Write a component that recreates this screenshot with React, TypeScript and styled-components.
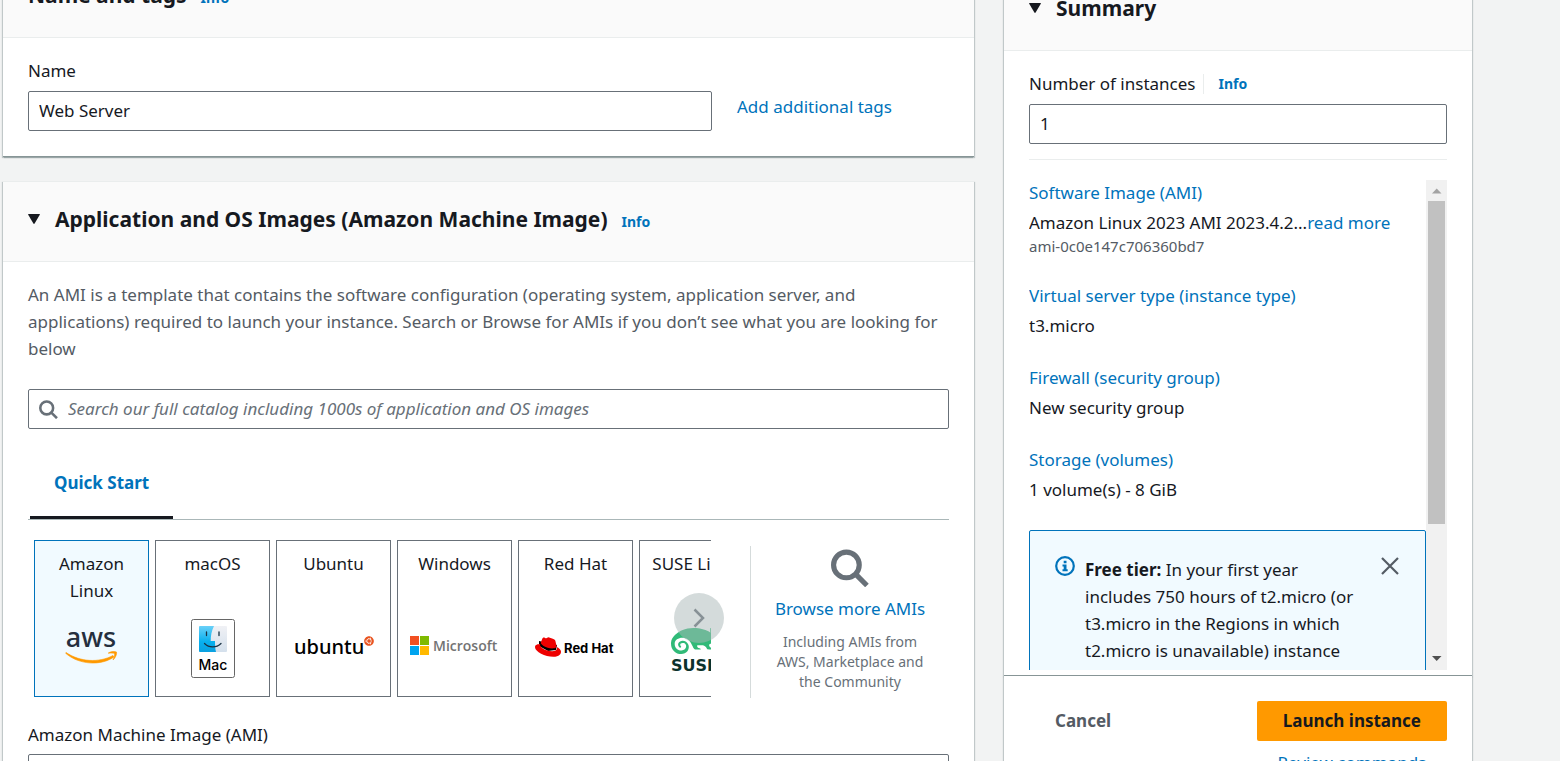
import React from "react";
import styled, { createGlobalStyle, css } from "styled-components";
import { SiRedhat, SiSuse } from "react-icons/si";
import { FaUbuntu } from "react-icons/fa";

const color = {
  text: "#16191f",
  secondary: "#545b64",
  muted: "#687078",
  link: "#0073bb",
  line: "#eaeded",
  page: "#f2f3f3",
  header: "#fafafa",
  info: "#f1faff",
};

const GlobalStyle = createGlobalStyle`
  *, *::before, *::after { box-sizing: border-box; }
  body {
    margin: 0;
    background: ${color.page};
    color: ${color.text};
    font-family: "Noto Sans", "Open Sans", sans-serif;
    font-size: 17px;
    line-height: 27px;
  }
  button, input { font: inherit; color: inherit; }
  h2, p, ul { margin: 0; padding: 0; }
`;

const Page = styled.main`
  height: 100vh;
  overflow: hidden;
  padding: 0 88px 0 3px;
`;

const Columns = styled.div`
  display: grid;
  grid-template-columns: minmax(0, 1fr) 468px;
  gap: 30px;
  align-items: start;
  margin-top: -43px;
`;

const MainColumn = styled.div`
  display: grid;
  grid-template-columns: minmax(0, 1fr);
  gap: 24px;
`;

const SideColumn = styled.aside`
  padding-top: 13px;
`;

const Card = styled.section`
  background: #fff;
  border-top: 1px solid ${color.line};
  border-bottom: 1px solid #879596;
  box-shadow: 1px 1px 1px rgba(0, 28, 36, 0.2), -1px 1px 1px rgba(0, 28, 36, 0.2);
`;

const CardHeader = styled.header`
  display: flex;
  align-items: center;
  height: 80px;
  padding: 0 25px 6px;
  background: ${color.header};
  border-bottom: 1px solid ${color.line};
`;

const CardTitle = styled.h2`
  font-size: 21px;
  line-height: 28px;
  font-weight: 700;
`;

const Caret = styled.svg`
  width: 12px;
  height: 12px;
  margin-right: 15px;
  fill: ${color.text};
`;

const CardBody = styled.div`
  padding: 19px 25px 25px;
`;

const Link = styled.a`
  color: ${color.link};
  text-decoration: none;
`;

const InfoLink = styled(Link)`
  font-size: 14px;
  font-weight: 700;
  line-height: 20px;
  margin-left: 14px;
`;

const HeaderInfo = styled(InfoLink)`
  padding-top: 6px;
`;

const Label = styled.label`
  display: block;
`;

const boxed = css`
  width: 100%;
  height: 40px;
  border: 1px solid ${color.muted};
  border-radius: 2px;
  background: #fff;
`;

const TextInput = styled.input`
  ${boxed}
  padding: 0 10px 2px;
  outline: none;
`;

const NameRow = styled.div`
  display: grid;
  grid-template-columns: minmax(0, 1fr) 212px;
  gap: 25px;
  margin-top: 7px;
`;

const TagsLink = styled(Link)`
  line-height: 32px;
`;

const Description = styled.p`
  color: ${color.secondary};
`;

const SearchBox = styled.div`
  ${boxed}
  display: flex;
  align-items: center;
  gap: 10px;
  margin-top: 27px;
  padding: 0 10px;
`;

const SearchField = styled.input`
  flex: 1;
  min-width: 0;
  border: 0;
  padding: 0 0 2px;
  outline: none;
  background: transparent;
  &::placeholder {
    color: ${color.muted};
    font-style: italic;
    opacity: 1;
  }
`;

const TabBar = styled.div`
  display: flex;
  height: 91px;
  padding: 20px 0 0 2px;
  border-bottom: 1px solid #aab7b8;
`;

const Tab = styled.button`
  border: 0;
  border-bottom: 3px solid ${color.text};
  background: none;
  padding: 0 24px;
  color: ${color.link};
  font-weight: 700;
`;

const QuickStart = styled.div`
  display: flex;
  align-items: flex-start;
  padding: 20px 0 23px 6px;
`;

const Carousel = styled.div`
  position: relative;
  flex: 1;
  min-width: 0;
`;

const Tiles = styled.div`
  display: flex;
  gap: 6px;
  overflow: hidden;
`;

const Tile = styled.button<{ $selected?: boolean }>`
  display: flex;
  flex: 0 0 115px;
  flex-direction: column;
  height: 157px;
  padding: 9px 10px 10px;
  border: 1px solid ${(p) => (p.$selected ? color.link : color.muted)};
  background: ${(p) => (p.$selected ? color.info : "#fff")};
  text-align: center;
`;

const TileName = styled.span`
  display: block;
  width: 100%;
  height: 55px;
`;

const TileLogo = styled.span`
  display: flex;
  flex: 1;
  width: 100%;
  align-items: center;
  justify-content: center;
`;

const NextButton = styled.button`
  position: absolute;
  top: 53px;
  right: -13px;
  display: flex;
  align-items: center;
  justify-content: center;
  width: 50px;
  height: 50px;
  padding: 0;
  border: 0;
  border-radius: 50%;
  background: rgba(170, 183, 184, 0.5);
`;

const Browse = styled.div`
  display: flex;
  flex: 0 0 199px;
  flex-direction: column;
  align-items: center;
  height: 152px;
  margin: 6px 0 0 39px;
  padding-top: 3px;
  border-left: 1px solid #d5dbdb;
  text-align: center;
`;

const BrowseLink = styled(Link)`
  margin-top: 8px;
`;

const BrowseNote = styled.p`
  width: 168px;
  margin-top: 10px;
  color: ${color.muted};
  font-size: 14px;
  line-height: 20px;
`;

const AmiSelect = styled.button`
  ${boxed}
  display: block;
  height: 90px;
  margin-top: 6px;
`;

const InstancesLabel = styled.div`
  display: flex;
  align-items: center;
  margin-bottom: 7px;
`;

const LabelInfo = styled(InfoLink)`
  margin-left: 8px;
  padding-left: 14px;
  border-left: 1px solid ${color.line};
`;

const SummaryBody = styled.div`
  padding: 19px 25px 5px;
`;

const Scroller = styled.div`
  display: flex;
  height: 511px;
  margin-top: 15px;
  padding-top: 20px;
  border-top: 1px solid ${color.line};
`;

const ScrollContent = styled.div`
  flex: 1;
  min-width: 0;
  margin-top: -1px;
  overflow: hidden;
`;

const ScrollTrack = styled.div`
  display: flex;
  flex: 0 0 21px;
  flex-direction: column;
  align-items: center;
  background: #f1f1f1;
`;

const ScrollArrow = styled.svg`
  width: 21px;
  height: 21px;
`;

const ScrollThumb = styled.div`
  width: 17px;
  height: 323px;
  margin-bottom: auto;
  background: #c1c1c1;
`;

const Facts = styled.div`
  display: grid;
  gap: 25px;
`;

const Fact = styled.div`
  white-space: nowrap;
`;

const FactValue = styled.div`
  margin-top: 3px;
`;

const FactNote = styled.div`
  color: ${color.secondary};
  font-size: 15px;
  line-height: 21px;
`;

const Alert = styled.div`
  display: flex;
  align-items: flex-start;
  margin-top: 27px;
  padding: 25px;
  border: 1px solid ${color.link};
  border-radius: 2px;
  background: ${color.info};
`;

const AlertIcon = styled.svg`
  flex: none;
  width: 20px;
  height: 20px;
`;

const AlertText = styled.p`
  flex: 0 0 276px;
  margin-left: 10px;
`;

const CloseButton = styled.button`
  display: flex;
  margin-left: auto;
  padding: 0;
  border: 0;
  background: none;
`;

const Footer = styled.footer`
  display: flex;
  justify-content: space-between;
  align-items: flex-start;
  padding: 25px 25px 25px;
  background: #fff;
  box-shadow: 1px 1px 1px rgba(0, 28, 36, 0.2), -1px 1px 1px rgba(0, 28, 36, 0.2);
`;

const Button = styled.button<{ $primary?: boolean }>`
  height: 40px;
  padding: 0 26px 2px;
  border: 0;
  border-radius: 2px;
  background: ${(p) => (p.$primary ? "#ff9900" : "transparent")};
  color: ${(p) => (p.$primary ? color.text : color.secondary)};
  font-weight: 700;
  white-space: nowrap;
`;

const Launch = styled.div`
  display: flex;
  flex-direction: column;
  align-items: center;
  gap: 8px;
`;

function CaretDown() {
  return (
    <Caret viewBox="0 0 12 12" aria-hidden="true">
      <path d="M.6 1h10.8q.8.1.4.8L6.6 10.500q-.6.8-1.2 0L.2 1.800Q-.2 1.100.6 1z" />
    </Caret>
  );
}

function Magnifier({ size, weight }: { size: number; weight: number }) {
  return (
    <svg width={size} height={size} viewBox="0 0 37 37" fill="none" stroke={color.muted} strokeWidth={weight} aria-hidden="true">
      <circle cx="15" cy="15.500" r="12.500" />
      <path d="M24 24.500 35 35.500" />
    </svg>
  );
}

function AwsLogo() {
  return (
    <svg width="54" height="40" viewBox="0 0 54 40" role="img" overflow="visible">
      <text x="26" y="21" textAnchor="middle" fontFamily="'Noto Sans', sans-serif" fontSize="27" fontWeight="500" fill="#252f3e">aws</text>
      <path d="M1 26.500C15 36 34 37 48 29.500l1 1.500C36 40 14 39 .7 27.300z" fill="#f90" stroke="#f90" strokeWidth=".6" />
      <path d="M43.500 26.800c3-1.600 6.500-1.500 8-.8.500 1.800-.7 5.600-3.500 8 1.500-3 1.900-5.200 1.500-6.300-1-.7-3.600-.8-6-.4z" fill="#f90" stroke="#f90" strokeWidth=".6" />
    </svg>
  );
}

function MacLogo() {
  return (
    <svg width="44" height="65" viewBox="0 -6 44 65" role="img">
      <defs>
        <linearGradient id="finderBlue" x1="0" y1="0" x2="0" y2="1">
          <stop offset="0" stopColor="#6ad0f8" />
          <stop offset=".6" stopColor="#08b0ee" />
          <stop offset="1" stopColor="#0aa0e0" />
        </linearGradient>
        <linearGradient id="finderGrey" x1="0" y1="0" x2="0" y2="1">
          <stop offset="0" stopColor="#f0f1f5" />
          <stop offset="1" stopColor="#d4e0ec" />
        </linearGradient>
      </defs>
      <rect x=".5" y=".5" width="43" height="58" rx="2" fill="#fff" stroke="#666" />
      <rect x="8" y="7" width="28" height="26" rx="1" fill="url(#finderGrey)" />
      <path d="M9 7h14c-2.500 5-3.300 10-3.300 15H24c0 4 .2 8 1 11H9q-1 0-1-1V8q0-1 1-1z" fill="url(#finderBlue)" />
      <path d="M15.500 13v3.500M28 13v3.500M13.500 24.500c4.500 4.500 12 4.500 16.500 0" fill="none" stroke="#1a3244" strokeWidth="1.300" strokeLinecap="round" />
      <text x="22" y="51" textAnchor="middle" fontFamily="Inter, sans-serif" fontSize="14" fontWeight="500">Mac</text>
    </svg>
  );
}

function UbuntuLogo() {
  return (
    <svg width="80" height="24" viewBox="0 0 80 24" role="img" overflow="visible">
      <text x="0" y="20" fontFamily="'Noto Sans', sans-serif" fontSize="20" fontWeight="500">ubuntu</text>
      <FaUbuntu x="70" y="2" width="10" height="10" size={10} color="#e95420" />
    </svg>
  );
}

function MicrosoftLogo() {
  return (
    <svg width="89" height="20" viewBox="0 0 89 20" role="img">
      <path d="M0 0h9v9H0z" fill="#f25022" />
      <path d="M10 0h9v9h-9z" fill="#7fba00" />
      <path d="M0 10h9v9H0z" fill="#00a4ef" />
      <path d="M10 10h9v9h-9z" fill="#ffb900" />
      <text x="23" y="15" fontFamily="'Open Sans', sans-serif" fontSize="14" fontWeight="600" fill="#737373">Microsoft</text>
    </svg>
  );
}

function RedHatLogo() {
  return (
    <svg width="82" height="26" viewBox="0 0 82 26" role="img">
      <path d="M4 8 22 12l-1 5-8 1-9-5z" />
      <SiRedhat x="0" y="1" width="26" height="26" size={26} color="#e00" />
      <text x="29" y="20" fontFamily="Inter, sans-serif" fontSize="13" fontWeight="700">Red Hat</text>
    </svg>
  );
}

function SuseLogo() {
  return (
    <svg width="52" height="52" viewBox="0 0 52 52" role="img" overflow="visible">
      <SiSuse x="0" y="-5" width="52" height="52" size={52} color="#30ba78" />
      <text x="0" y="51" fontFamily="'DejaVu Sans', sans-serif" fontSize="16" fontWeight="700" fill="#0c322c">SUSE</text>
    </svg>
  );
}

const systems = [
  { name: "Amazon Linux", Logo: AwsLogo },
  { name: "macOS", Logo: MacLogo },
  { name: "Ubuntu", Logo: UbuntuLogo },
  { name: "Windows", Logo: MicrosoftLogo },
  { name: "Red Hat", Logo: RedHatLogo },
  { name: "SUSE Linux", Logo: SuseLogo },
];

const facts = [
  { title: "Virtual server type (instance type)", value: "t3.micro" },
  { title: "Firewall (security group)", value: "New security group" },
  { title: "Storage (volumes)", value: "1 volume(s) - 8 GiB" },
];

function NameCard() {
  return (
    <Card>
      <CardHeader>
        <CardTitle>Name and tags</CardTitle>
        <HeaderInfo href="#">Info</HeaderInfo>
      </CardHeader>
      <CardBody>
        <Label htmlFor="name">Name</Label>
        <NameRow>
          <TextInput id="name" defaultValue="Web Server" />
          <TagsLink href="#">Add additional tags</TagsLink>
        </NameRow>
      </CardBody>
    </Card>
  );
}

function ImagesCard() {
  return (
    <Card>
      <CardHeader>
        <CaretDown />
        <CardTitle>Application and OS Images (Amazon Machine Image)</CardTitle>
        <HeaderInfo href="#">Info</HeaderInfo>
      </CardHeader>
      <CardBody>
        <Description>
          An AMI is a template that contains the software configuration (operating system, application server, and
          applications) required to launch your instance. Search or Browse for AMIs if you don’t see what you are
          looking for below
        </Description>
        <SearchBox>
          <Magnifier size={19} weight={5} />
          <SearchField
            type="text"
            aria-label="Search images"
            placeholder="Search our full catalog including 1000s of application and OS images"
          />
        </SearchBox>
        <TabBar role="tablist">
          <Tab role="tab" aria-selected="true">Quick Start</Tab>
        </TabBar>
        <QuickStart>
          <Carousel>
            <Tiles>
              {systems.map(({ name, Logo }, i) => (
                <Tile key={name} $selected={i === 0}>
                  <TileName>{name}</TileName>
                  <TileLogo><Logo /></TileLogo>
                </Tile>
              ))}
            </Tiles>
            <NextButton aria-label="Next">
              <svg width="12" height="20" viewBox="0 0 12 20" fill="none" stroke="#879196" strokeWidth="2.500">
                <path d="M1.500 1.500 10 10l-8.500 8.500" />
              </svg>
            </NextButton>
          </Carousel>
          <Browse>
            <Magnifier size={38} weight={5} />
            <BrowseLink href="#">Browse more AMIs</BrowseLink>
            <BrowseNote>Including AMIs from AWS, Marketplace and the Community</BrowseNote>
          </Browse>
        </QuickStart>
        <Label htmlFor="ami">Amazon Machine Image (AMI)</Label>
        <AmiSelect id="ami" />
      </CardBody>
    </Card>
  );
}

function Summary() {
  return (
    <SideColumn>
      <Card>
        <CardHeader>
          <CaretDown />
          <CardTitle>Summary</CardTitle>
        </CardHeader>
        <SummaryBody>
          <InstancesLabel>
            <Label htmlFor="count">Number of instances</Label>
            <LabelInfo href="#">Info</LabelInfo>
          </InstancesLabel>
          <TextInput id="count" defaultValue="1" />
          <Scroller>
            <ScrollContent>
              <Facts>
                <Fact>
                  <Link href="#">Software Image (AMI)</Link>
                  <FactValue>
                    Amazon Linux 2023 AMI 2023.4.2...<Link href="#">read more</Link>
                  </FactValue>
                  <FactNote>ami-0c0e147c706360bd7</FactNote>
                </Fact>
                {facts.map((f) => (
                  <Fact key={f.title}>
                    <Link href="#">{f.title}</Link>
                    <FactValue>{f.value}</FactValue>
                  </Fact>
                ))}
              </Facts>
              <Alert>
                <AlertIcon viewBox="0 0 20 20" aria-hidden="true">
                  <circle cx="10" cy="10" r="8.800" fill="none" stroke={color.link} strokeWidth="2.200" />
                  <path d="M8.700 4.700h2.800v2.500H8.700zM7.500 8.600h4v4.600h1.200v2H7.500v-2h1.200v-2.600H7.500z" fill={color.link} />
                </AlertIcon>
                <AlertText>
                  <b>Free tier:</b> In your first year includes 750 hours of t2.micro (or t3.micro in the Regions in
                  which t2.micro is unavailable) instance
                </AlertText>
                <CloseButton aria-label="Dismiss">
                  <svg width="20" height="20" viewBox="0 0 20 20" fill="none" stroke={color.secondary} strokeWidth="2.200">
                    <path d="M2 2l16 16M18 2 2 18" />
                  </svg>
                </CloseButton>
              </Alert>
            </ScrollContent>
            <ScrollTrack>
              <ScrollArrow viewBox="0 0 21 21"><path d="M6 13.500h9.500L10.700 8.500z" fill="#a3a3a3" /></ScrollArrow>
              <ScrollThumb />
              <ScrollArrow viewBox="0 0 21 21"><path d="M6 7h9.500l-4.800 5z" fill="#505050" /></ScrollArrow>
            </ScrollTrack>
          </Scroller>
        </SummaryBody>
      </Card>
      <Footer>
        <Button>Cancel</Button>
        <Launch>
          <Button $primary>Launch instance</Button>
          <Link href="#">Review commands</Link>
        </Launch>
      </Footer>
    </SideColumn>
  );
}

export default function App() {
  return (
    <>
      <GlobalStyle />
      <Page>
        <Columns>
          <MainColumn>
            <NameCard />
            <ImagesCard />
          </MainColumn>
          <Summary />
        </Columns>
      </Page>
    </>
  );
}
